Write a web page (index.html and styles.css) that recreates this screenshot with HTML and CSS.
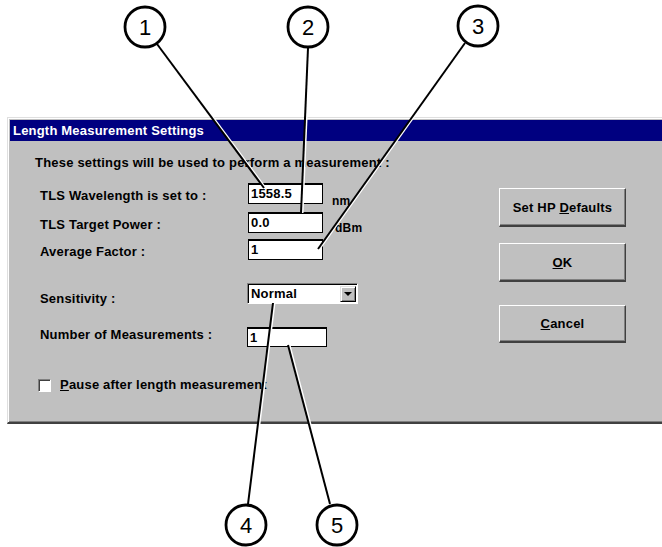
FILE: index.html
```html
<!DOCTYPE html>
<html lang="en">
<head>
  <meta charset="UTF-8">
  <title>Length Measurement Settings</title>
  <link rel="stylesheet" href="styles.css">
</head>
<body>
  <div class="page">
    <div class="dialog">
      <div class="titlebar">Length Measurement Settings</div>

      <div class="dialog-body">
        <!-- Settings form -->
        <div class="form">
          <p class="intro">These settings will be used to perform a measurement :</p>

          <div class="row row-first">
            <span class="label">TLS Wavelength is set to :</span>
            <div class="field">1558.5</div>
            <span class="unit unit-nm">nm</span>
          </div>

          <div class="row row-power">
            <span class="label">TLS Target Power :</span>
            <div class="field">0.0</div>
            <span class="unit unit-dbm">dBm</span>
          </div>

          <div class="row row-avg">
            <span class="label">Average Factor :</span>
            <div class="field">1</div>
          </div>

          <div class="row row-combo">
            <span class="label">Sensitivity :</span>
            <div class="combo">
              <span class="combo-text">Normal</span>
              <span class="combo-btn"><span class="arrow"></span></span>
            </div>
          </div>

          <div class="row row-count">
            <span class="label">Number of Measurements :</span>
            <div class="field field-wide">1</div>
          </div>

          <label class="check-row">
            <span class="checkbox"></span>
            <span><u>P</u>ause after length measurement</span>
          </label>
        </div>

        <!-- Buttons -->
        <div class="buttons">
          <div class="btn btn-defaults"><span>Set HP <u>D</u>efaults</span></div>
          <div class="btn btn-ok"><span><u>O</u>K</span></div>
          <div class="btn btn-cancel"><span><u>C</u>ancel</span></div>
        </div>
      </div>
    </div>
  </div>

  <!-- Callouts drawn over the screenshot -->
  <svg class="callouts" width="662" height="547" viewBox="0 0 662 547">
    <g stroke="#fff" stroke-width="2" transform="translate(1.5 0)">
      <line x1="157" y1="44" x2="264" y2="188"/>
      <line x1="308" y1="48" x2="301" y2="213"/>
      <line x1="465" y1="43" x2="318" y2="249"/>
      <line x1="273" y1="303" x2="248" y2="504"/>
      <line x1="288" y1="345" x2="330" y2="504"/>
    </g>
    <g stroke="#000" stroke-width="2">
      <line x1="157" y1="44" x2="264" y2="188"/>
      <line x1="308" y1="48" x2="301" y2="213"/>
      <line x1="465" y1="43" x2="318" y2="249"/>
      <line x1="273" y1="303" x2="248" y2="504"/>
      <line x1="288" y1="345" x2="330" y2="504"/>
    </g>
    <g fill="#fff" stroke="#000" stroke-width="2.8">
      <circle cx="145" cy="27" r="20"/>
      <circle cx="308" cy="27" r="20"/>
      <circle cx="478" cy="26" r="20"/>
      <circle cx="246" cy="525" r="20"/>
      <circle cx="337" cy="525" r="20"/>
    </g>
    <g class="num" text-anchor="middle">
      <text x="145" y="35">1</text>
      <text x="308" y="35">2</text>
      <text x="478" y="34">3</text>
      <text x="246" y="533">4</text>
      <text x="337" y="533">5</text>
    </g>
  </svg>
</body>
</html>
```

FILE: styles.css
```css
/* Page */
body {
  margin: 0;
  width: 662px;
  height: 547px;
  overflow: hidden;
  position: relative;
  background: #fff;
  font-family: "Liberation Sans", Arial, sans-serif;
  font-size: 13px;
  font-weight: bold;
  letter-spacing: 0.2px;
  color: #000;
}

.page {
  padding: 117px 0 0 7px;
}

/* Dialog window */
.dialog {
  width: 680px;
  height: 307px;
  box-sizing: border-box;
  padding: 2px;
  background: #c0c0c0;
  border-top: 1px solid #dfdfdf;
  border-left: 1px solid #dfdfdf;
  border-bottom: 2px solid #404040;
  box-shadow: inset 1px 1px #fff, inset 0 -1px #808080;
}

.titlebar {
  height: 21px;
  line-height: 21px;
  padding-left: 3px;
  background: #000080;
  color: #fff;
}

.dialog-body {
  display: flex;
}

.form {
  width: 464px;
  padding: 15px 0 0 25px;
}

.intro {
  margin: 0;
  line-height: 14px;
}

/* Form rows */
.row {
  display: flex;
  align-items: flex-start;
  height: 21px;
  margin-left: 5px;
}

.row-first { margin-top: 13px; }
.row-power { margin-top: 8px; }
.row-avg { margin-top: 6px; }
.row-combo { margin-top: 23px; height: 20px; }
.row-count { margin-top: 24px; height: 20px; }

.label {
  width: 208px;
  line-height: 14px;
  margin-top: 6px;
}

.row-combo .label { margin-top: 9px; width: 207px; }
.row-count .label { margin-top: 1px; width: 207px; }

.field {
  width: 75px;
  height: 21px;
  box-sizing: border-box;
  padding-left: 2px;
  background: #fff;
  border: 1px solid #000;
  border-top-width: 2px;
  line-height: 18px;
}

.field-wide {
  width: 80px;
  height: 20px;
  line-height: 17px;
}

.unit {
  line-height: 14px;
  font-size: 12px;
}

.unit-nm { margin: 11px 0 0 9px; }
.unit-dbm { margin: 9px 0 0 12px; }

/* Combo box */
.combo {
  display: flex;
  align-items: center;
  width: 111px;
  height: 21px;
  box-sizing: border-box;
  background: #fff;
  border: 1px solid;
  border-color: #808080 #fff #fff #808080;
  box-shadow: inset 1px 1px #000;
  padding: 2px 1px 1px 3px;
}

.combo-text {
  flex: 1;
  line-height: 16px;
}

.combo-btn {
  display: flex;
  align-items: center;
  justify-content: center;
  width: 16px;
  height: 16px;
  box-sizing: border-box;
  background: #c0c0c0;
  border: 1px solid;
  border-color: #dfdfdf #000 #000 #dfdfdf;
  box-shadow: inset 1px 1px #fff, inset -1px -1px #808080;
}

.arrow {
  width: 0;
  height: 0;
  border-left: 4px solid transparent;
  border-right: 4px solid transparent;
  border-top: 4px solid #000;
}

/* Checkbox */
.check-row {
  display: flex;
  align-items: center;
  margin-top: 31px;
  margin-left: 3px;
  line-height: 14px;
}

.checkbox {
  width: 13px;
  height: 13px;
  box-sizing: border-box;
  margin-right: 9px;
  background: #fff;
  border: 1px solid;
  border-color: #808080 #fff #fff #808080;
  box-shadow: inset 1px 1px #404040;
}

/* Buttons */
.buttons {
  display: flex;
  flex-direction: column;
  padding-top: 47px;
}

.btn {
  width: 127px;
  height: 39px;
  box-sizing: border-box;
  display: flex;
  align-items: center;
  justify-content: center;
  background: #c0c0c0;
  border: 1px solid;
  border-color: #fff #404040 #404040 #fff;
  border-bottom-width: 2px;
  box-shadow: inset -1px -1px #808080;
}

.btn-ok { margin-top: 16px; }
.btn-cancel { margin-top: 23px; height: 38px; }

/* Callouts */
.callouts {
  position: absolute;
  left: 0;
  top: 0;
}

.num text {
  font-family: "Liberation Sans", Arial, sans-serif;
  font-size: 22px;
  font-weight: normal;
  letter-spacing: 0;
}
```
